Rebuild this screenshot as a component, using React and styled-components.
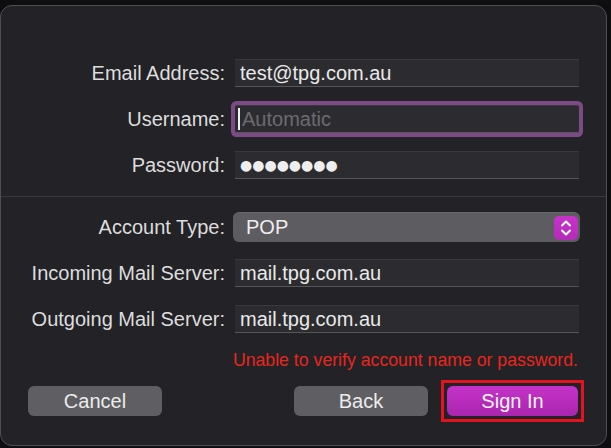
import React from "react";
import styled, { createGlobalStyle } from "styled-components";

const GlobalStyle = createGlobalStyle`
  html, body {
    margin: 0;
    padding: 0;
    background: #0e0e11;
  }
  body {
    font-family: "Liberation Sans", Arial, sans-serif;
    -webkit-font-smoothing: antialiased;
  }
`;

const Window = styled.div`
  margin-top: 5px;
  width: 607px;
  height: 441px;
  box-sizing: border-box;
  border: 1px solid #4f4e53;
  border-radius: 12px;
  background: #232227;
  padding-top: 44px;
  overflow: hidden;
`;

const Row = styled.div`
  display: grid;
  grid-template-columns: 224px 344px;
  column-gap: 10px;
  height: 46px;
  align-items: center;
`;

const Label = styled.label`
  text-align: right;
  font-size: 20px;
  color: #dddddd;
  white-space: nowrap;
`;

const Field = styled.div`
  height: 28px;
  box-sizing: border-box;
  display: flex;
  align-items: center;
  padding: 0 5px;
  background: #2c2c30;
  border-top: 1px solid #39393d;
  border-bottom: 1px solid #56565a;
  border-radius: ${(p) => (p.$focused ? "2px" : "0")};
  box-shadow: ${(p) => (p.$focused ? "0 0 0 4px #7c4a85" : "none")};
  font-size: 20px;
  color: ${(p) => (p.$placeholder ? "#6c6b70" : "#e9e9e9")};
  white-space: nowrap;
`;

const Caret = styled.span`
  display: inline-block;
  width: 2px;
  height: 22px;
  background: #f2f2f2;
  margin: 0 2px 0 -2px;
`;

const Dots = styled.span`
  font-family: "DejaVu Sans", sans-serif;
  font-size: 14px;
  letter-spacing: 0;
  color: #eeeeee;
`;

const Separator = styled.div`
  height: 1px;
  background: #39383d;
  margin-top: 8px;
`;

const Section = styled.div`
  margin-top: ${(p) => p.$top || 0}px;
`;

const Popup = styled.div`
  height: 30px;
  margin-left: -2px;
  margin-right: -1px;
  box-sizing: border-box;
  display: flex;
  align-items: center;
  justify-content: space-between;
  padding: 0 2px 0 13px;
  background: #5d5c61;
  border-top: 1px solid #67666b;
  border-radius: 6px;
  font-size: 20px;
  color: #eeeeee;
`;

const Stepper = styled.span`
  width: 24px;
  height: 24px;
  border-radius: 5px;
  background: linear-gradient(#c633c9, #b52ab9);
  display: flex;
  align-items: center;
  justify-content: center;
`;

const ErrorText = styled.div`
  margin-top: 8px;
  padding-right: 28px;
  text-align: right;
  line-height: 20px;
  font-size: 17.7px;
  color: #e8261d;
`;

const ButtonRow = styled.div`
  margin-top: 10px;
  display: flex;
  align-items: center;
  padding: 0 22px 0 27px;
`;

const Button = styled.button`
  width: ${(p) => p.$width || 134}px;
  height: 30px;
  border: none;
  border-radius: 6px;
  background: #5f5e63;
  color: #ececec;
  font-family: "Liberation Sans", Arial, sans-serif;
  font-size: 20px;
  padding: 0;
  margin-left: ${(p) => (p.$push ? "auto" : "0")};
`;

const PrimaryButton = styled(Button)`
  background: linear-gradient(#c632c9, #a925af);
  color: #f6f6f6;
`;

const Highlight = styled.span`
  display: flex;
  margin-left: 13px;
  padding: 3px;
  border: 3px solid #e3141f;
`;

const rows1 = [
  { label: "Email Address:", value: "test@tpg.com.au" },
  { label: "Username:", placeholder: "Automatic", focused: true },
  { label: "Password:", password: true },
];

function StepperIcon() {
  return (
    <svg width="14" height="20" viewBox="0 0 14 20" fill="none">
      <path d="M3 7.5 L7 3.5 L11 7.5" stroke="#fff" strokeWidth="2" strokeLinecap="round" strokeLinejoin="round" />
      <path d="M3 12.5 L7 16.5 L11 12.5" stroke="#fff" strokeWidth="2" strokeLinecap="round" strokeLinejoin="round" />
    </svg>
  );
}

export default function App() {
  return (
    <>
      <GlobalStyle />
      <Window>
        <Section>
          {rows1.map((r) => (
            <Row key={r.label}>
              <Label>{r.label}</Label>
              <Field $focused={r.focused} $placeholder={!!r.placeholder}>
                {r.focused && <Caret />}
                {r.password ? <Dots>●●●●●●●●</Dots> : r.value || r.placeholder}
              </Field>
            </Row>
          ))}
        </Section>
        <Separator />
        <Section $top={7}>
          <Row>
            <Label>Account Type:</Label>
            <Popup>
              POP
              <Stepper>
                <StepperIcon />
              </Stepper>
            </Popup>
          </Row>
          <Row>
            <Label>Incoming Mail Server:</Label>
            <Field>mail.tpg.com.au</Field>
          </Row>
          <Row>
            <Label>Outgoing Mail Server:</Label>
            <Field>mail.tpg.com.au</Field>
          </Row>
        </Section>
        <ErrorText>Unable to verify account name or password.</ErrorText>
        <ButtonRow>
          <Button>Cancel</Button>
          <Button $push>Back</Button>
          <Highlight>
            <PrimaryButton $width={131}>Sign In</PrimaryButton>
          </Highlight>
        </ButtonRow>
      </Window>
    </>
  );
}
